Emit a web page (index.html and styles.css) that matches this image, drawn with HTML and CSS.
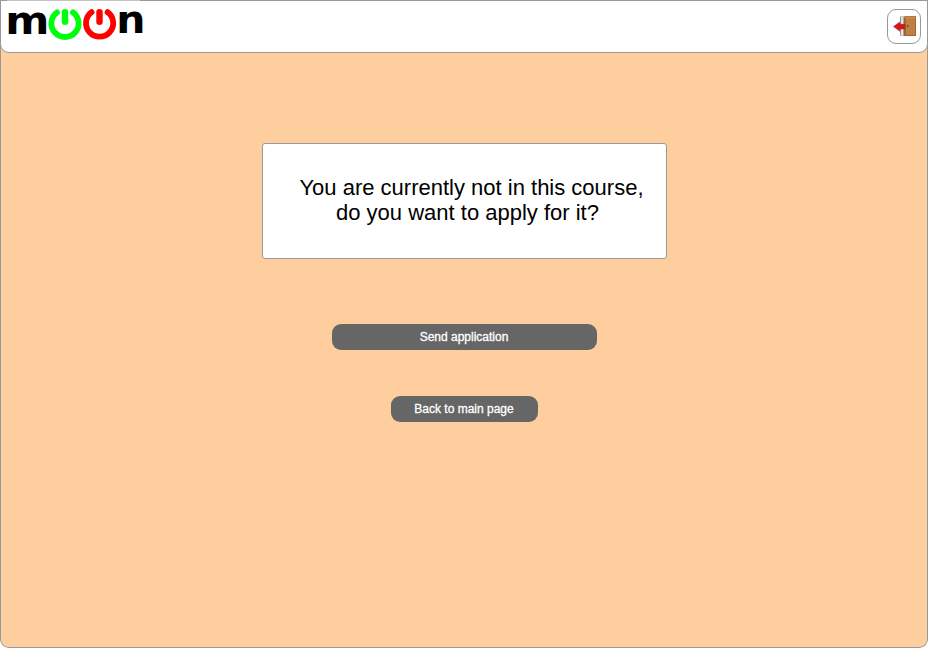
FILE: index.html
```html
<!DOCTYPE html>
<html lang="en">
<head>
<meta charset="utf-8">
<title>moon</title>
<link rel="stylesheet" href="styles.css">
</head>
<body>
<div class="page">
  <header class="header">
    <svg class="logo" width="148" height="44" viewBox="0 0 148 44" role="img" aria-label="moon">
      <path d="M7 .5H140" stroke="#c4c4c4"/>
      <text class="logo-text" transform="translate(5.3 34) scale(1.115 1)">m</text>
      <text class="logo-text" transform="translate(116.3 33) scale(1.08 .98)">n</text>
      <g fill="none" stroke-linecap="round">
        <g stroke="#00ff0c">
          <path stroke-width="5.8" d="M57 12.4A13.6 13.6 0 1 0 73 12.4"/>
          <path stroke-width="6.4" d="M65 12.2V21.8"/>
        </g>
        <g stroke="#ff0000">
          <path stroke-width="5.8" d="M91.6 12.1A13.6 13.6 0 1 0 107.6 12.1"/>
          <path stroke-width="6.4" d="M99.5 12.2V21.8"/>
        </g>
      </g>
    </svg>
    <button class="exit" aria-label="Log out">
      <svg class="exit-icon" width="24" height="24" viewBox="0 0 24 24">
        <path fill="#8a918c" d="M7 2.5h7v19H7z"/>
        <path fill="#e0e8e4" d="M8 3h4v18H8z"/>
        <path fill="#a4642e" d="M10.5 3.2 12.5 2H23V22H10.5z"/>
        <path fill="#bd8045" d="M13 3H22V21H13z"/>
        <path fill="#c98d50" d="M12 2.5H22.5V4.5H12z"/>
        <circle cx="14.6" cy="12" r=".9" fill="#70401a"/>
        <path fill="#d31621" stroke="#a91620" stroke-width=".5" d="M.5 12.6 6.8 8V10.3H11.8V15H6.8V17.2z"/>
      </svg>
    </button>
  </header>
  <main class="content">
    <p class="message">
      <span class="line first">You are currently not in this course,</span>
      <span class="line second">do you want to apply for it?</span>
    </p>
    <button class="action send">Send application</button>
    <button class="action back">Back to main page</button>
  </main>
</div>
</body>
</html>
```
FILE: styles.css
```css
* { box-sizing: border-box; }
body {
  margin: 0;
  background: #fff;
  font-family: "Liberation Sans", Arial, sans-serif;
}
.page {
  width: 928px;
  height: 648px;
  border: 1px solid #999;
  border-top: 0;
  border-radius: 0 0 9px 9px;
  background: #ffce9f;
}
.header {
  display: flex;
  justify-content: space-between;
  align-items: flex-start;
  height: 53px;
  margin: 0 -1px;
  border: 1px solid #999;
  border-radius: 0 0 9px 9px;
  background: #fff;
}
.logo {
  display: block;
  margin: -1px 0 0 -1px;
}
.logo-text {
  font: bold 38px "DejaVu Sans", sans-serif;
  fill: #000;
}
.exit {
  display: flex;
  align-items: center;
  justify-content: center;
  width: 34px;
  height: 35px;
  margin: 8px 6px 0 0;
  padding: 0;
  border: 1px solid #999;
  border-radius: 9px;
  background: #fff;
}
.exit-icon { margin: -1px 0 0 1px; }
.content {
  display: flex;
  flex-direction: column;
  align-items: center;
  padding-top: 90px;
}
.message {
  width: 405px;
  height: 116px;
  margin: 0 0 65px;
  padding-top: 31px;
  border: 1px solid #999;
  border-radius: 3px;
  background: #fff;
  color: #000;
  font-size: 22px;
  line-height: 25px;
  text-align: center;
  white-space: nowrap;
}
.line { display: block; }
.first { padding-left: 15px; }
.second { padding-left: 7px; }
.action {
  height: 26px;
  padding: 0;
  border: 0;
  border-radius: 9px;
  background: #666;
  color: #fff;
  font: 12px/26px "Liberation Sans", Arial, sans-serif;
  -webkit-text-stroke: .3px #fff;
}
.send {
  width: 265px;
  margin-bottom: 46px;
}
.back { width: 147px; }
```
